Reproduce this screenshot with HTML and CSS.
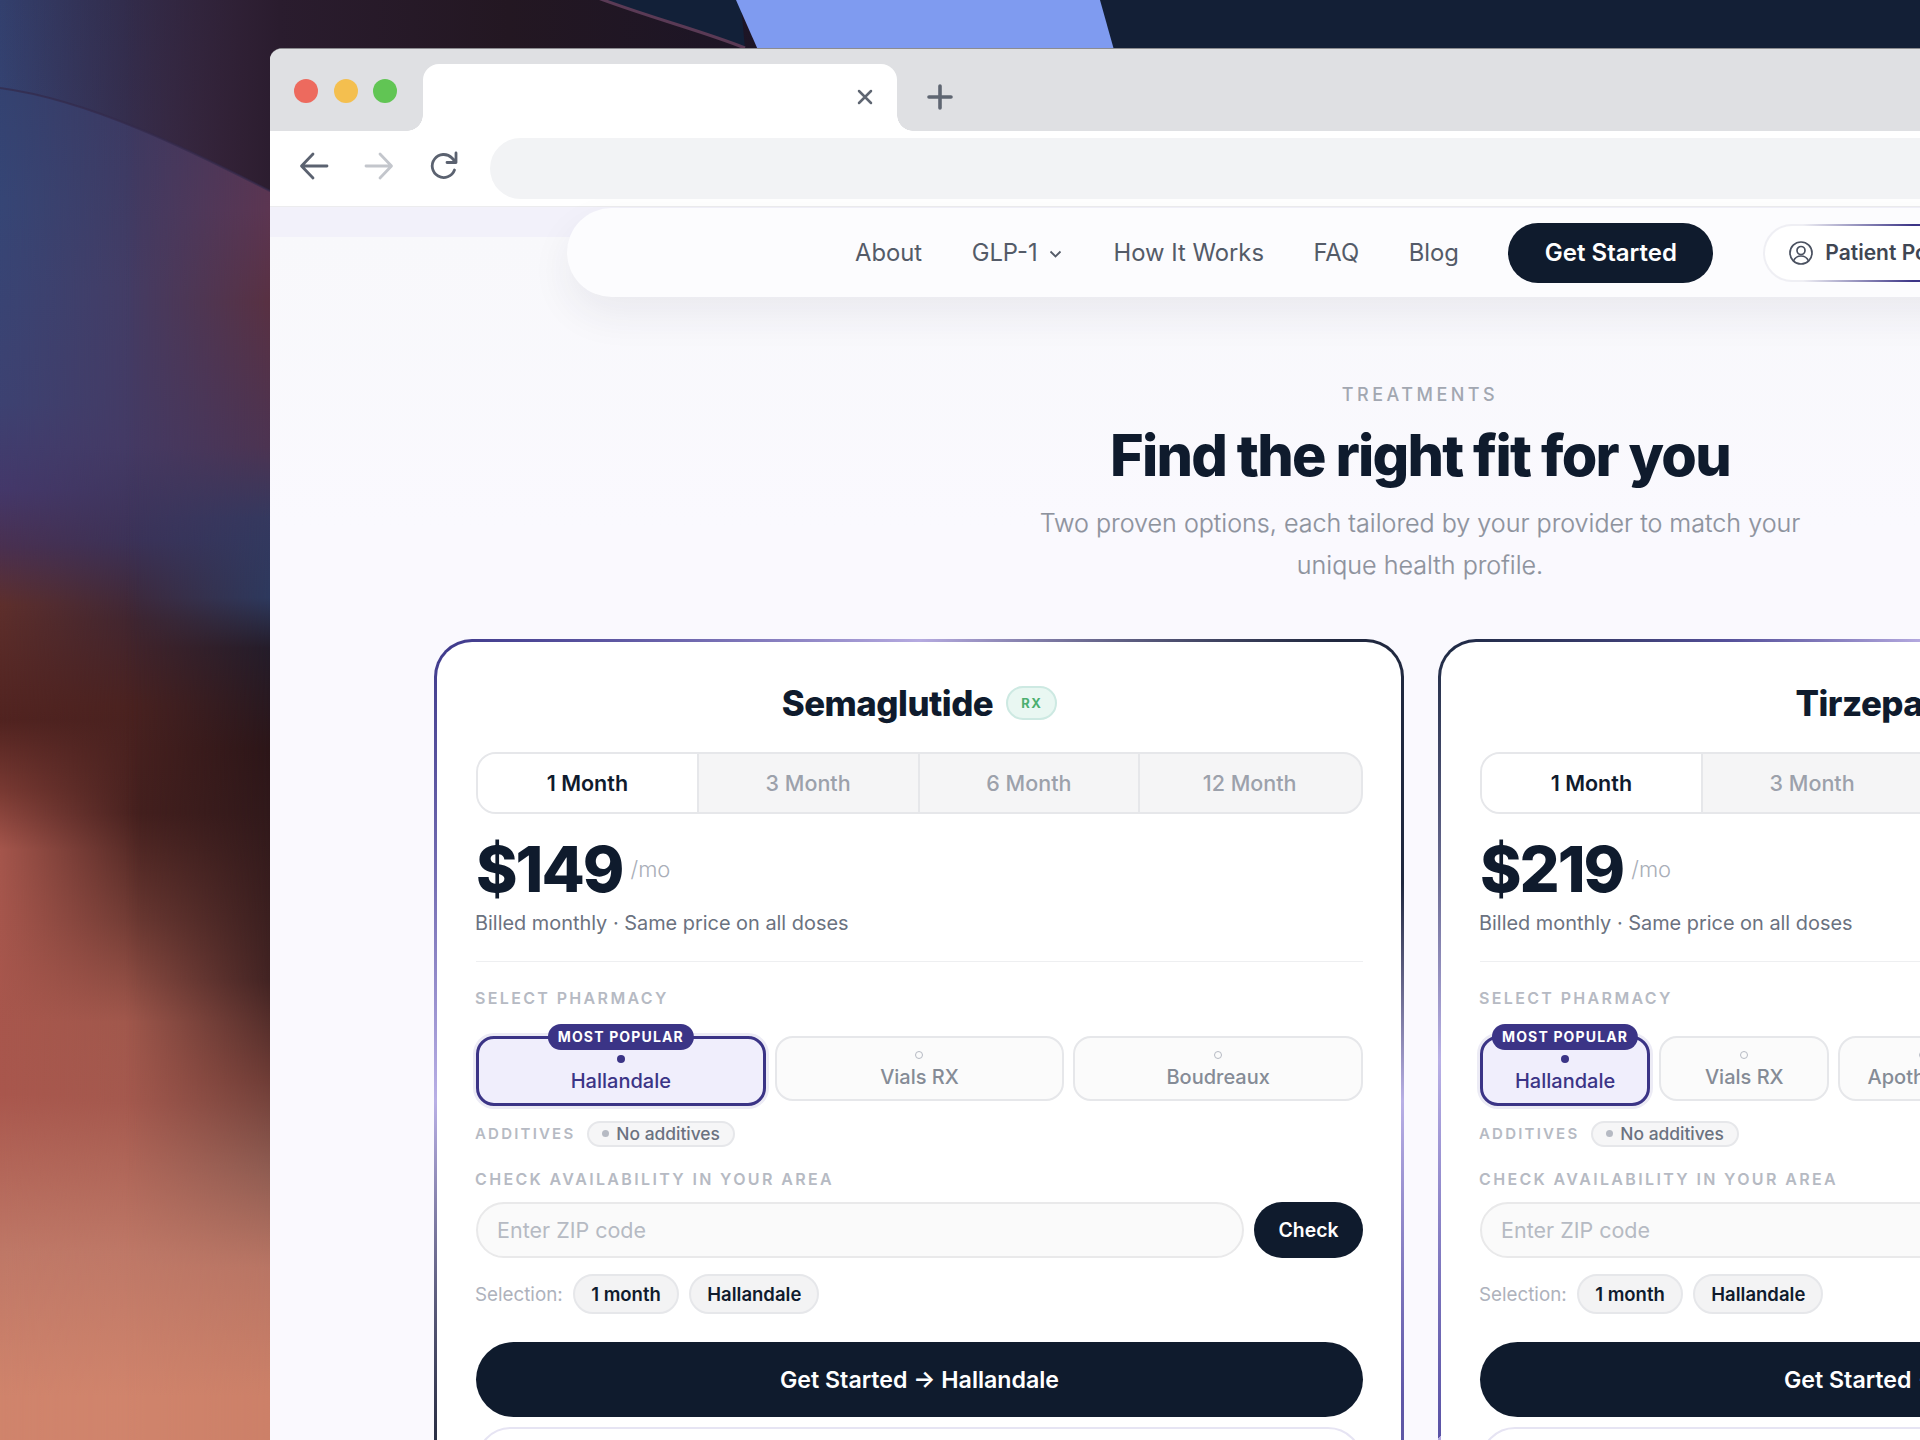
FILE: index.html
```html
<!DOCTYPE html>
<html lang="en">
<head>
    <meta charset="UTF-8">
    <title>Treatments</title>
    <link rel="stylesheet" href="styles.css">
</head>
<body>
    <!-- desktop wallpaper -->
    <svg class="wallpaper" width="1920" height="1440" viewBox="0 0 1920 1440">
        <defs>
            <linearGradient id="colLeft" x1="0" x2="0" y1="0" y2="1">
                <stop offset="0" stop-color="#33406e"/>
                <stop offset="0.14" stop-color="#364676"/>
                <stop offset="0.28" stop-color="#3d4272"/>
                <stop offset="0.34" stop-color="#44386a"/>
                <stop offset="0.38" stop-color="#4a3050"/>
                <stop offset="0.42" stop-color="#5e2f2c"/>
                <stop offset="0.5" stop-color="#512320"/>
                <stop offset="0.55" stop-color="#7a3a33"/>
                <stop offset="0.59" stop-color="#a5564c"/>
                <stop offset="0.76" stop-color="#a9574d"/>
                <stop offset="0.87" stop-color="#bf7867"/>
                <stop offset="0.97" stop-color="#d0846c"/>
            </linearGradient>
            <linearGradient id="colMid" x1="0" x2="0" y1="0" y2="1">
                <stop offset="0" stop-color="#38375f"/>
                <stop offset="0.2" stop-color="#443c64"/>
                <stop offset="0.31" stop-color="#443a64"/>
                <stop offset="0.375" stop-color="#3b3258"/>
                <stop offset="0.43" stop-color="#3f2530"/>
                <stop offset="0.49" stop-color="#4a2220"/>
                <stop offset="0.565" stop-color="#45201e"/>
                <stop offset="0.64" stop-color="#6e3a33"/>
                <stop offset="0.71" stop-color="#a0584c"/>
                <stop offset="0.765" stop-color="#a4594e"/>
                <stop offset="0.87" stop-color="#be7867"/>
                <stop offset="0.97" stop-color="#d0846c"/>
            </linearGradient>
            <linearGradient id="colRight" x1="0" x2="0" y1="0" y2="1">
                <stop offset="0" stop-color="#4a3556"/>
                <stop offset="0.146" stop-color="#5e3550"/>
                <stop offset="0.21" stop-color="#5a3040"/>
                <stop offset="0.31" stop-color="#4d3350"/>
                <stop offset="0.36" stop-color="#34395f"/>
                <stop offset="0.415" stop-color="#2c3a60"/>
                <stop offset="0.45" stop-color="#221c2a"/>
                <stop offset="0.52" stop-color="#2a1518"/>
                <stop offset="0.68" stop-color="#3c2020"/>
                <stop offset="0.75" stop-color="#6a3a34"/>
                <stop offset="0.81" stop-color="#8b5a50"/>
                <stop offset="0.88" stop-color="#b87564"/>
                <stop offset="0.97" stop-color="#cc8068"/>
            </linearGradient>
            <linearGradient id="maskMid" x1="0" x2="280" y1="0" y2="0" gradientUnits="userSpaceOnUse">
                <stop offset="0" stop-color="#000"/>
                <stop offset="0.5" stop-color="#fff"/>
            </linearGradient>
            <linearGradient id="maskRight" x1="0" x2="280" y1="0" y2="0" gradientUnits="userSpaceOnUse">
                <stop offset="0.45" stop-color="#000"/>
                <stop offset="1" stop-color="#fff"/>
            </linearGradient>
            <mask id="fadeMid"><rect width="280" height="1440" fill="url(#maskMid)"/></mask>
            <mask id="fadeRight"><rect width="280" height="1440" fill="url(#maskRight)"/></mask>
            <linearGradient id="above" x1="0" x2="280" y1="0" y2="0" gradientUnits="userSpaceOnUse">
                <stop offset="0" stop-color="#2a1c2e" stop-opacity="0"/>
                <stop offset="0.5" stop-color="#2a1c2e" stop-opacity="0.45"/>
                <stop offset="1" stop-color="#2a1c2e" stop-opacity="1"/>
            </linearGradient>
            <linearGradient id="topStrip" x1="280" x2="1040" y1="0" y2="0" gradientUnits="userSpaceOnUse">
                <stop offset="0" stop-color="#2a1c2e"/>
                <stop offset="0.3" stop-color="#231722"/>
                <stop offset="1" stop-color="#15122a"/>
            </linearGradient>
        </defs>
        <rect width="1920" height="1440" fill="#131f36"/>
        <rect width="280" height="1440" fill="url(#colLeft)"/>
        <rect width="280" height="1440" fill="url(#colMid)" mask="url(#fadeMid)"/>
        <rect width="280" height="1440" fill="url(#colRight)" mask="url(#fadeRight)"/>
        <path d="M0 0H280V196C190 150 90 100 0 88Z" fill="url(#above)"/>
        <path d="M0 88C90 100 190 150 280 196" fill="none" stroke="#33294a" stroke-width="2" opacity="0.7"/>
        <rect x="280" width="760" height="50" fill="url(#topStrip)"/>
        <path d="M590 -5C650 20 700 30 745 48L740 -5Z" fill="#122038"/>
        <path d="M590 -5C650 18 700 30 745 48" fill="none" stroke="#5a3a55" stroke-width="3"/>
        <path d="M736 0H1100L1114 50H758Z" fill="#7f9bf0"/>
    </svg>

    <div class="window">
        <div class="tabstrip">
            <div class="lights">
                <span class="light red"></span>
                <span class="light yellow"></span>
                <span class="light green"></span>
            </div>
            <div class="tab">
                <svg class="tab-close" width="16" height="16" viewBox="0 0 16 16"><path d="M2 2l12 12M14 2L2 14"/></svg>
            </div>
            <svg class="tab-new" width="26" height="26" viewBox="0 0 26 26"><path d="M13 2v22M2 13h22"/></svg>
        </div>

        <div class="toolbar">
            <svg class="tool" width="30" height="30" viewBox="0 0 30 30"><path d="M28 15H3M14 3L2.500 15 14 27"/></svg>
            <svg class="tool faded" width="30" height="30" viewBox="0 0 30 30"><path d="M2 15h25M16 3l11.500 12L16 27"/></svg>
            <svg class="tool" width="30" height="30" viewBox="0 0 30 30"><path d="M25.500 19A11.500 11.500 0 1 1 23 7l4 4.500M27 2v9.500h-9"/></svg>
            <div class="urlbar"></div>
        </div>

        <div class="page">
            <nav class="navbar">
                <a class="nav-link">About</a>
                <a class="nav-link nav-drop">GLP-1
                    <svg width="13" height="8" viewBox="0 0 13 8"><path d="M1.500 1.500L6.500 6.500l5-5"/></svg>
                </a>
                <a class="nav-link">How It Works</a>
                <a class="nav-link">FAQ</a>
                <a class="nav-link">Blog</a>
                <a class="nav-cta">Get Started</a>
                <a class="nav-portal">
                    <svg width="26" height="26" viewBox="0 0 26 26"><circle cx="13" cy="13" r="11"/><circle cx="13" cy="10.500" r="4"/><path d="M5.500 21c1.500-3.500 4-5 7.500-5s6 1.500 7.500 5"/></svg>
                    Patient Portal
                </a>
            </nav>

            <header class="intro">
                <div class="eyebrow">TREATMENTS</div>
                <h1>Find the right fit for you</h1>
                <p>Two proven options, each tailored by your provider to match your unique health profile.</p>
            </header>

            <section class="cards">
                <article class="card card-first">
                    <h2 class="card-title">Semaglutide <span class="rx">RX</span></h2>
                    <div class="terms">
                        <div class="term active">1 Month</div>
                        <div class="term">3 Month</div>
                        <div class="term">6 Month</div>
                        <div class="term">12 Month</div>
                    </div>
                    <div class="price"><strong>$149</strong><span>/mo</span></div>
                    <div class="billed">Billed monthly · Same price on all doses</div>
                    <hr class="divider">
                    <div class="label pharmacy-label">SELECT PHARMACY</div>
                    <div class="pharmacies">
                        <div class="pharmacy active"><span class="badge">MOST POPULAR</span><i></i>Hallandale</div>
                        <div class="pharmacy"><i></i>Vials RX</div>
                        <div class="pharmacy"><i></i>Boudreaux</div>
                    </div>
                    <div class="additives">
                        <span class="label additives-label">ADDITIVES</span>
                        <span class="additive-chip"><i></i>No additives</span>
                    </div>
                    <div class="label zip-label">CHECK AVAILABILITY IN YOUR AREA</div>
                    <div class="zip-row">
                        <input class="zip" type="text" placeholder="Enter ZIP code">
                        <button class="check">Check</button>
                    </div>
                    <div class="selection">
                        <span>Selection:</span>
                        <span class="chip">1 month</span>
                        <span class="chip">Hallandale</span>
                    </div>
                    <button class="cta">Get Started → Hallandale</button>
                    <div class="outline"></div>
                </article>

                <article class="card card-second">
                    <h2 class="card-title">Tirzepatide <span class="rx">RX</span></h2>
                    <div class="terms">
                        <div class="term active">1 Month</div>
                        <div class="term">3 Month</div>
                        <div class="term">6 Month</div>
                        <div class="term">12 Month</div>
                    </div>
                    <div class="price"><strong>$219</strong><span>/mo</span></div>
                    <div class="billed">Billed monthly · Same price on all doses</div>
                    <hr class="divider">
                    <div class="label pharmacy-label">SELECT PHARMACY</div>
                    <div class="pharmacies five">
                        <div class="pharmacy active"><span class="badge">MOST POPULAR</span><i></i>Hallandale</div>
                        <div class="pharmacy"><i></i>Vials RX</div>
                        <div class="pharmacy"><i></i>Apothecary</div>
                        <div class="pharmacy"><i></i>Boudreaux</div>
                        <div class="pharmacy"><i></i>Compound</div>
                    </div>
                    <div class="additives">
                        <span class="label additives-label">ADDITIVES</span>
                        <span class="additive-chip"><i></i>No additives</span>
                    </div>
                    <div class="label zip-label">CHECK AVAILABILITY IN YOUR AREA</div>
                    <div class="zip-row">
                        <input class="zip" type="text" placeholder="Enter ZIP code">
                        <button class="check">Check</button>
                    </div>
                    <div class="selection">
                        <span>Selection:</span>
                        <span class="chip">1 month</span>
                        <span class="chip">Hallandale</span>
                    </div>
                    <button class="cta">Get Started → Hallandale</button>
                    <div class="outline"></div>
                </article>
            </section>
        </div>
    </div>
</body>
</html>
```

FILE: styles.css
```css
:root {
    --ink: #0f1b2d;
    --indigo: #3b3486;
    --muted: #6b7280;
    --faint: #b6bac3;
    --line: #e6e7ea;
}

* {
    margin: 0;
    padding: 0;
    box-sizing: border-box;
}

html, body {
    height: 1440px;
    overflow: hidden;
}

body {
    background: #131f36;
    font-family: 'Inter', 'Liberation Sans', sans-serif;
    color: var(--ink);
    position: relative;
}

.wallpaper {
    position: absolute;
    top: 0;
    left: 0;
}

/* browser window */
.window {
    position: relative;
    width: 2300px;
    height: 1392px;
    margin: 48px 0 0 270px;
    border-top: 1px solid #8c8c90;
    border-radius: 12px 0 0 0;
    overflow: hidden;
    background: #fff;
}

.tabstrip {
    display: flex;
    height: 82px;
    padding-top: 15px;
    background: #dfe0e3;
}

.lights {
    display: flex;
    gap: 15.500px;
    width: 153px;
    padding: 15px 0 0 24px;
}

.light {
    width: 24px;
    height: 24px;
    border-radius: 50%;
}

.red { background: #ed6a5e; }
.yellow { background: #f4bf4f; }
.green { background: #61c554; }

.tab {
    position: relative;
    display: flex;
    justify-content: flex-end;
    width: 474px;
    padding: 25px 24px 0 0;
    background: #fff;
    border-radius: 16px 16px 0 0;
}

.tab::before,
.tab::after {
    content: "";
    position: absolute;
    bottom: 0;
    width: 16px;
    height: 16px;
}

.tab::before {
    left: -16px;
    background: radial-gradient(circle at 0 0, transparent 15.500px, #fff 16px);
}

.tab::after {
    right: -16px;
    background: radial-gradient(circle at 100% 0, transparent 15.500px, #fff 16px);
}

.tab-close {
    fill: none;
    stroke: #5f6672;
    stroke-width: 2.500;
    stroke-linecap: round;
}

.tab-new {
    margin: 20px 0 0 30px;
    fill: none;
    stroke: #5f6672;
    stroke-width: 3.600;
    stroke-linecap: round;
}

.toolbar {
    display: flex;
    align-items: center;
    gap: 35px;
    height: 75px;
    padding-left: 29px;
    background: #fff;
}

.tool {
    flex: none;
    margin-bottom: 5px;
    fill: none;
    stroke: #5b6270;
    stroke-width: 2.800;
    stroke-linecap: round;
    stroke-linejoin: round;
}

.tool.faded { stroke: #c3c6cc; }

.urlbar {
    flex: 1;
    height: 61px;
    margin-left: -4px;
    background: #f2f3f5;
    border-radius: 31px;
}

.page {
    height: 1240px;
    background: linear-gradient(#f2f1fa 0, #f2f1fa 30px, #f8f8fb 30px, #faf9fe 320px);
    border-top: 1px solid #ececee;
}

/* site nav */
.navbar {
    display: flex;
    align-items: center;
    width: 1706px;
    height: 89px;
    margin: 1px 0 0 297px;
    padding-left: 288px;
    background: #fcfcfe;
    border-radius: 45px;
    box-shadow: 0 18px 40px rgba(40, 40, 70, 0.07);
}

.nav-link {
    margin-right: 49.500px;
    font-size: 23.800px;
    color: #545b68;
    white-space: nowrap;
}

.nav-drop {
    display: flex;
    align-items: center;
    gap: 11px;
    margin-right: 52px;
}

.nav-drop svg {
    margin-top: 3px;
    fill: none;
    stroke: #545b68;
    stroke-width: 1.800;
}

.nav-cta {
    display: flex;
    align-items: center;
    justify-content: center;
    width: 205px;
    height: 60px;
    margin-right: 50px;
    background: var(--ink);
    border-radius: 30px;
    color: #fff;
    font-size: 24px;
    font-weight: 600;
}

.nav-portal {
    display: flex;
    align-items: center;
    gap: 11px;
    width: 260px;
    height: 58px;
    padding-left: 23px;
    border: 2px solid transparent;
    border-radius: 29px;
    background: linear-gradient(#fff, #fff) padding-box, linear-gradient(90deg, #efeff4 0, #efeff4 40px, #3b3486 150px) border-box;
    font-size: 21px;
    font-weight: 600;
    color: #3f4653;
    white-space: nowrap;
}

.nav-portal svg {
    flex: none;
    fill: none;
    stroke: #4a5160;
    stroke-width: 1.700;
}

/* heading */
.intro {
    margin-top: 87px;
    text-align: center;
}

.eyebrow {
    font-size: 18px;
    line-height: 22px;
    font-weight: 500;
    letter-spacing: 3.500px;
    color: #a2a7b1;
}

.intro h1 {
    margin-top: 15px;
    font-size: 57.500px;
    line-height: 68px;
    font-weight: 800;
    letter-spacing: -1.800px;
}

.intro p {
    width: 800px;
    margin: 13px auto 0;
    font-size: 25.100px;
    line-height: 42px;
    font-weight: 300;
    -webkit-text-stroke: 0.200px #8d929d;
    color: #8d929d;
}

/* cards */
.cards {
    display: flex;
    gap: 34px;
    margin: 53px 0 0 164px;
}

.card {
    flex: none;
    width: 970px;
    height: 1100px;
    padding: 39px 38px 0 39px;
    border: 3px solid transparent;
    border-radius: 38px;
}

.card-first {
    background: linear-gradient(#fff, #fff) padding-box, conic-gradient(from 232deg at 50% 420px, #2a2f45 0deg, #b9b0e6 33deg, #3f3a8c 79deg, #b5aae0 128deg, #20283f 173deg, #20283f 198deg, #b9b0e6 223deg, #5f58a8 253deg, #2a2f45 360deg) border-box;
}

.card-second {
    background: linear-gradient(#fff, #fff) padding-box, conic-gradient(from 232deg at 50% 420px, #5a53a6 0deg, #b9b0e6 38deg, #1f2a44 79deg, #55509a 103deg, #b5aae0 128deg, #b5aae0 360deg) border-box;
}

.card-title {
    display: flex;
    align-items: center;
    justify-content: center;
    gap: 13px;
    height: 44px;
    font-size: 34.800px;
    font-weight: 800;
    letter-spacing: -0.500px;
}

.rx {
    display: flex;
    align-items: center;
    justify-content: center;
    width: 51px;
    height: 34px;
    background: #e9f7f2;
    border: 2px solid #cde9e2;
    border-radius: 17px;
    font-size: 13px;
    font-weight: 700;
    letter-spacing: 1.500px;
    color: #4caf70;
}

.terms {
    display: grid;
    grid-template-columns: repeat(4, 1fr);
    height: 62px;
    margin-top: 27px;
    border: 2px solid var(--line);
    border-radius: 20px;
    overflow: hidden;
    background: #f5f5f6;
}

.term {
    display: flex;
    align-items: center;
    justify-content: center;
    margin-left: -2px;
    padding-right: 2px;
    border-left: 2px solid var(--line);
    font-size: 21.500px;
    font-weight: 500;
    color: #9ca1ab;
}

.term.active {
    margin-left: 0;
    background: #fff;
    border-left: 0;
    font-weight: 600;
    color: var(--ink);
}

.price {
    display: flex;
    align-items: center;
    gap: 8px;
    height: 76px;
    margin-top: 17px;
}

.price strong {
    font-size: 63px;
    font-weight: 800;
    letter-spacing: -2px;
}

.price span {
    font-size: 22px;
    font-weight: 300;
    color: #a9aeb8;
}

.billed {
    margin-top: 4px;
    margin-left: -1px;
    font-size: 19.900px;
    line-height: 24px;
    color: var(--muted);
}

.divider {
    height: 1px;
    margin-top: 26px;
    border: 0;
    background: #eeeff1;
}

.label {
    margin-left: -1px;
    font-size: 16px;
    line-height: 20px;
    font-weight: 600;
    letter-spacing: 2.350px;
    color: var(--faint);
}

.pharmacy-label { margin-top: 26px; }

.pharmacies {
    display: grid;
    grid-template-columns: repeat(3, 1fr);
    gap: 9px;
    align-items: start;
    height: 70px;
    margin-top: 28px;
}

.pharmacies.five { grid-template-columns: repeat(5, 1fr); }

.pharmacy {
    position: relative;
    display: flex;
    flex-direction: column;
    align-items: center;
    justify-content: center;
    gap: 6px;
    height: 65px;
    padding-top: 2px;
    background: #fbfbfb;
    border: 2px solid var(--line);
    border-radius: 18px;
    font-size: 20px;
    line-height: 24px;
    font-weight: 500;
    color: #858b96;
}

.pharmacy i {
    width: 8px;
    height: 8px;
    border: 1.500px solid #b6bac3;
    border-radius: 50%;
}

.pharmacy.active {
    height: 70px;
    padding-top: 6px;
    background: #f0eefc;
    border: 3px solid var(--indigo);
    box-shadow: 0 0 0 3px #ecebf5;
    color: var(--indigo);
}

.pharmacy.active i {
    border: 0;
    background: var(--indigo);
}

.badge {
    position: absolute;
    top: -15px;
    left: 50%;
    transform: translateX(-50%);
    padding: 0 10px;
    line-height: 26px;
    background: var(--indigo);
    border-radius: 13px;
    font-size: 14px;
    font-weight: 700;
    letter-spacing: 1.150px;
    color: #fff;
    white-space: nowrap;
}

.additives {
    display: flex;
    align-items: center;
    gap: 12px;
    height: 25px;
    margin-top: 15px;
}

.additives-label {
    font-size: 15px;
    letter-spacing: 2.200px;
}

.additive-chip {
    display: flex;
    align-items: center;
    gap: 7px;
    height: 26px;
    padding: 0 13px;
    background: #f6f6f7;
    border: 2px solid var(--line);
    border-radius: 13px;
    font-size: 17.400px;
    font-weight: 500;
    color: var(--muted);
}

.additive-chip i {
    width: 7px;
    height: 7px;
    background: #b6bac3;
    border-radius: 50%;
}

.zip-label { margin-top: 23px; }

.zip-row {
    display: flex;
    gap: 10px;
    margin-top: 13px;
}

.zip {
    flex: 1;
    height: 56px;
    padding-left: 19px;
    background: #fafafa;
    border: 2px solid #e9e9ea;
    border-radius: 28px;
    font: 400 21.500px 'Inter', sans-serif;
}

.zip::placeholder { color: #b6bac3; }

.check {
    width: 109px;
    height: 56px;
    background: var(--ink);
    border: 0;
    border-radius: 28px;
    font: 600 19.400px 'Inter', sans-serif;
    color: #fff;
}

.selection {
    display: flex;
    align-items: center;
    gap: 10.500px;
    height: 40px;
    margin-top: 16px;
    margin-left: -1px;
    font-size: 18.800px;
    color: #aeb2bc;
}

.chip {
    display: flex;
    align-items: center;
    height: 40px;
    padding: 0 16px;
    background: #f3f3f4;
    border: 2px solid var(--line);
    border-radius: 20px;
    font-size: 18.500px;
    font-weight: 600;
    color: var(--ink);
}

.cta {
    display: block;
    width: 100%;
    height: 75px;
    margin-top: 28px;
    background: var(--ink);
    border: 0;
    border-radius: 38px;
    font: 600 23.200px 'Inter', sans-serif;
    color: #fff;
}

.outline {
    height: 70px;
    margin-top: 10px;
    border: 2px solid #e6e4f3;
    border-radius: 35px;
}
```
